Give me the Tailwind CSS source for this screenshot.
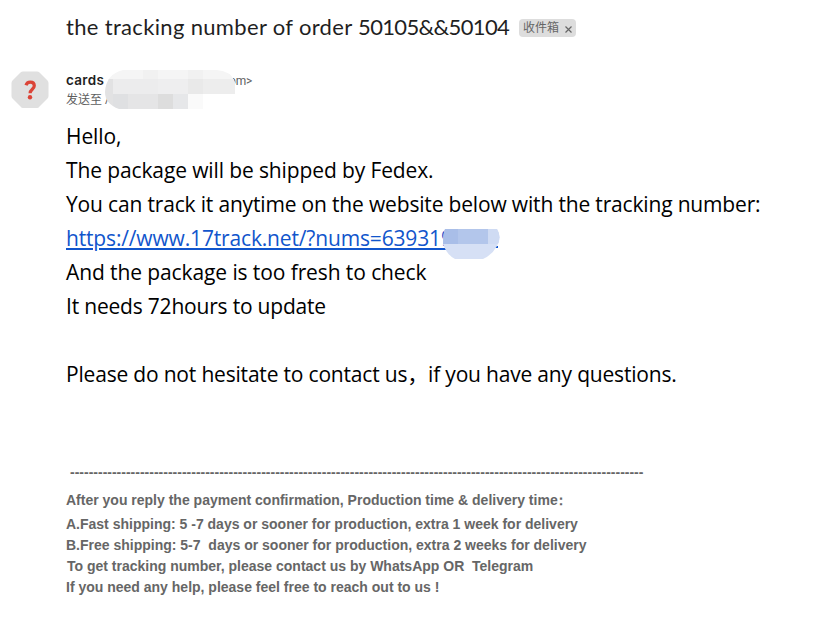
<!DOCTYPE html>
<html lang="en">

<head>
  <meta charset="UTF-8">
  <meta name="viewport" content="width=device-width, initial-scale=1.0">
  <title>the tracking number of order 50105&amp;&amp;50104</title>
  <script src="https://cdn.jsdelivr.net/npm/@tailwindcss/browser@4"></script>
</head>

<body class="bg-white h-[644px] overflow-hidden font-['Open_Sans','Noto_Sans_CJK_SC',sans-serif]">
  <header class="flex items-center h-9 mt-2.5 pl-[66px] whitespace-nowrap">
    <h1 class="w-[453px] -mt-[3px] font-['Lato','Noto_Sans',sans-serif] text-[22px] text-[#1f1f1f]">
      <span class="tracking-[0.33px]">the tracking number of order </span><span class="tracking-[-0.65px]">50105&amp;&amp;50104</span>
    </h1>
    <div class="flex items-center justify-between w-[57px] h-[18px] px-1 rounded bg-[#dddddd] text-[12px] text-[#666666]">
      <span>收件箱</span>
      <svg class="size-[7px] mt-0.5" viewBox="0 0 7 7" fill="none" stroke="#666" stroke-width="1.2">
        <path d="M.5.5l6 6M6.5.5l-6 6" />
      </svg>
    </div>
  </header>

  <section class="flex h-[56px] mt-[18px] pl-[11px] pt-[6px] whitespace-nowrap">
    <svg class="w-[38px] h-[38px] mt-px shrink-0" viewBox="0 0 38 38" fill="none">
      <path d="M12 .5h14q1.500 0 2.500 1l8 8q1 1 1 2.500v13q0 1.500-1 2.500l-8 8q-1 1.500-2.500 1.500H12q-1.500 0-2.500-1.500l-8-8q-1-1-1-2.500v-13q0-1.500 1-2.500l8-8q1-1 2.500-1z" fill="#e0e0e0" />
      <path d="M15 14.300c.6-2 2-3.100 4.200-3.100 2.500 0 4.100 1.400 4.100 3.600 0 3.400-4.200 3.500-4.200 7.500" stroke="#db4437" stroke-width="3.200" />
      <circle cx="19" cy="26.200" r="2.200" fill="#db4437" />
    </svg>
    <div class="relative ml-[17px] w-[200px] h-[44px]">
      <div class="flex h-5 items-center">
        <b class="w-[163px] font-['Inter',sans-serif] font-semibold text-[13.5px] tracking-[0.3px] text-[#1f1f1f]">cards</b>
        <span class="mt-0.5 font-['Roboto',sans-serif] text-[12px] tracking-[-0.2px] text-[#5e5e5e]">om&gt;</span>
      </div>
      <div class="h-5 leading-5 text-[12px] text-[#5e5e5e]">发送至 /</div>
      <!-- redacted sender -->
      <svg class="absolute left-[39px] top-0 w-[132px] h-[40px]" viewBox="0 0 132 40">
        <clipPath id="sender">
          <path d="M18 0H112q14 1 18 12v12H98v15H14Q0 34 0 22 1 4 18 0z" />
        </clipPath>
        <g clip-path="url(#sender)">
          <path fill="#f5f5f5" d="M0 0h132v10H0z" />
          <path fill="#f1f1f1" d="M38 0h15v10H38zM83 0h15v10H83z" />
          <path fill="#e2e2e3" d="M0 9h8v31H0z" />
          <path fill="#ececed" d="M8 9h45v15H8z" />
          <path fill="#eeeeef" d="M53 9h30v15H53z" />
          <path fill="#e9e9e9" d="M83 9h15v15H83z" />
          <path fill="#ededed" d="M98 9h34v15H98z" />
          <path fill="#dfe0e2" d="M8 24h15v16H8z" />
          <path fill="#e5e5e6" d="M23 24h30v16H23z" />
          <path fill="#dddddd" d="M53 24h15v16H53z" />
          <path fill="#e6e7e9" d="M68 24h15v16H68z" />
          <path fill="#fafafa" d="M83 24h15v16H83z" />
        </g>
      </svg>
    </div>
  </section>

  <main class="mt-[-1px] pl-[66px] text-[21px] leading-[34px] text-black whitespace-nowrap">
    <p class="tracking-[-0.1px]">Hello,</p>
    <p class="tracking-[-0.12px]">The package will be shipped by Fedex.</p>
    <p class="tracking-[-0.17px]">You can track it anytime on the website below with the tracking number:</p>
    <div class="relative w-[433px] h-[34px]">
      <a href="https://www.17track.net/?nums=639319" class="inline-block tracking-[-0.16px] text-[#1155cc] underline decoration-2 underline-offset-2">https://www.17track.net/?nums=639319</a>
      <svg class="absolute left-[377px] top-2 w-[57px] h-[30px]" viewBox="0 0 57 30">
        <path d="M4 0h53v30H4z" fill="#fff" />
        <path d="M50 17h5v2h-5z" fill="#1155cc" />
        <clipPath id="number">
          <path d="M2 0h52q5 8 0 17-5 9-14 13H12Q4 26 0 15 0 5 2 0z" />
        </clipPath>
        <g clip-path="url(#number)">
          <path fill="#d6e0f5" d="M0 0h57v30H0z" />
          <path fill="#a9bee8" d="M0 0h15v15H0z" />
          <path fill="#b3c6eb" d="M15 0h30v15H15z" />
          <path fill="#cfdbf3" d="M45 0h12v15H45z" />
        </g>
      </svg>
    </div>
    <p class="tracking-[-0.1px]">And the package is too fresh to check</p>
    <p class="tracking-[-0.2px]">It needs 72hours to update</p>
    <p class="h-[34px]"></p>
    <p class="tracking-[-0.19px]">Please do not hesitate to contact us，if you have any questions.</p>
  </main>

  <footer class="mt-[71px] pl-[66px] font-['Liberation_Sans',sans-serif] text-[14px] font-bold leading-[21px] text-[#666666] whitespace-nowrap">
    <p class="pl-1">---------------------------------------------------------------------------------------------------------------------------</p>
    <p class="h-[21px] mt-[7px]">After you reply the payment confirmation, Production time &amp; delivery tim<span class="tracking-[-4px]">e：</span></p>
    <p class="mt-[3px]">A.Fast shipping: 5 -7 days or sooner for production, extra 1 week for delivery</p>
    <p>B.Free shipping: 5-7&nbsp; days or sooner for production, extra 2 weeks for delivery</p>
    <p class="pl-px">To get tracking number, please contact us by WhatsApp OR&nbsp; Telegram</p>
    <p>If you need any help, please feel free to reach out to us !</p>
  </footer>
</body>

</html>
